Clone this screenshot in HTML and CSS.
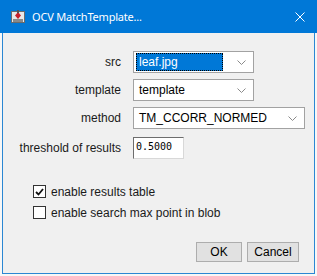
FILE: index.html
```html
<!DOCTYPE html>
<html lang="en">
<head>
    <meta charset="UTF-8">
    <title>OCV MatchTemplate...</title>
    <link rel="stylesheet" href="styles.css">
</head>
<body>
    <div class="titlebar">
        <svg class="app-icon" width="14" height="14" viewBox="0 0 14 14">
            <rect x="0.5" y="1.5" width="13" height="11" fill="#e8e8e8" stroke="#6b6b6b"/>
            <rect x="2" y="9" width="10" height="3" fill="#8a8a8a"/>
            <path d="M7 2 L10 5.5 L7 9 L4 5.5 Z" fill="#c8202a"/>
            <rect x="6" y="0" width="2" height="3" fill="#555"/>
        </svg>
        <span class="title">OCV MatchTemplate...</span>
        <svg class="close" width="10" height="10" viewBox="0 0 10 10">
            <path d="M0.5 0.5 L9.5 9.5 M9.5 0.5 L0.5 9.5" stroke="#fff" stroke-width="1"/>
        </svg>
    </div>

    <div class="dialog">
        <div class="form">
            <span class="label">src</span>
            <div class="combo combo-short">
                <span class="combo-value selected">leaf.jpg</span>
                <svg class="chevron" width="9" height="5" viewBox="0 0 9 5"><polyline points="0.5,0.5 4.5,4.5 8.5,0.5" fill="none" stroke="#8a8a8a"/></svg>
            </div>

            <span class="label">template</span>
            <div class="combo combo-short">
                <span class="combo-value">template</span>
                <svg class="chevron" width="9" height="5" viewBox="0 0 9 5"><polyline points="0.5,0.5 4.5,4.5 8.5,0.5" fill="none" stroke="#8a8a8a"/></svg>
            </div>

            <span class="label">method</span>
            <div class="combo combo-long">
                <span class="combo-value">TM_CCORR_NORMED</span>
                <svg class="chevron" width="9" height="5" viewBox="0 0 9 5"><polyline points="0.5,0.5 4.5,4.5 8.5,0.5" fill="none" stroke="#8a8a8a"/></svg>
            </div>

            <span class="label label-last">threshold of results</span>
            <div class="textfield">0.5000</div>
        </div>

        <div class="checks">
            <div class="check-row">
                <span class="checkbox">
                    <svg width="9" height="8" viewBox="0 0 9 8"><polyline points="1,4 3.5,6.5 8,1" fill="none" stroke="#111" stroke-width="1.8"/></svg>
                </span>
                <span>enable results table</span>
            </div>
            <div class="check-row">
                <span class="checkbox"></span>
                <span>enable search max point in blob</span>
            </div>
        </div>

        <div class="buttons">
            <button class="btn btn-ok">OK</button>
            <button class="btn btn-cancel">Cancel</button>
        </div>
    </div>
</body>
</html>
```

FILE: styles.css
```css
/* Page */
body {
    margin: 0;
    width: 317px;
    height: 276px;
    background: #f7f7f7;
    font-family: "Liberation Sans", Arial, sans-serif;
    font-size: 12px;
    color: #000;
    overflow: hidden;
}

/* Title bar */
.titlebar {
    height: 33px;
    background: #0078d7;
    display: flex;
    align-items: center;
    padding: 0 12px 0 11px;
    box-sizing: border-box;
    color: #fff;
}

.app-icon {
    margin-right: 7px;
    margin-top: 1px;
}

.title {
    font-family: "Noto Sans", "Open Sans", sans-serif;
    font-size: 11px;
    letter-spacing: -0.2px;
    flex: 1;
}

/* Dialog body */
.dialog {
    margin-left: 2px;
    width: 313px;
    height: 241px;
    box-sizing: border-box;
    background: #f0f0f0;
    border: 1px solid #2b87d3;
    border-top: none;
    display: flex;
    flex-direction: column;
}

.form {
    display: grid;
    grid-template-columns: 106px auto;
    column-gap: 12px;
    row-gap: 6px;
    padding: 18px 0 0 12px;
    justify-items: start;
    align-items: center;
}

.label {
    justify-self: end;
    color: #1a1a1a;
}

.label-last,
.textfield {
    margin-top: 2px;
}

/* Combo boxes */
.combo {
    height: 22px;
    box-sizing: border-box;
    background: #fff;
    border: 1px solid #a2a2a2;
    display: flex;
    align-items: center;
    padding: 0 4px 0 2px;
}

.combo-short {
    width: 121px;
}

.combo-long {
    width: 172px;
}

.combo-value {
    flex: 1;
    padding: 1px 2px;
    line-height: 14px;
    border: 1px solid transparent;
}

.combo-value.selected {
    background: #0078d7;
    color: #fff;
    border: 1px dotted #000;
    margin-right: 8px;
}

.chevron {
    margin-left: 6px;
    margin-right: 3px;
}

/* Text field */
.textfield {
    width: 51px;
    height: 22px;
    box-sizing: border-box;
    background: #fff;
    border-top: 1px solid #6d6d6d;
    border-left: 1px solid #6d6d6d;
    border-right: 1px solid #d8d8d8;
    border-bottom: 1px solid #d8d8d8;
    font-family: "DejaVu Sans Mono", "Liberation Mono", monospace;
    font-size: 10px;
    padding: 3px 0 0 2px;
}

/* Checkboxes */
.checks {
    margin-top: 22px;
    padding-left: 30px;
}

.check-row {
    height: 21px;
    display: flex;
    align-items: center;
    gap: 5px;
    color: #1a1a1a;
}

.checkbox {
    width: 13px;
    height: 13px;
    box-sizing: border-box;
    border: 1px solid #333;
    background: #fff;
    display: flex;
    align-items: center;
    justify-content: center;
}

/* Buttons */
.buttons {
    margin-top: 19px;
    display: flex;
    justify-content: flex-end;
    gap: 5px;
    padding-right: 15px;
}

.btn {
    height: 20px;
    box-sizing: border-box;
    background: #e1e1e1;
    border: 1px solid #adadad;
    font-family: "Liberation Sans", Arial, sans-serif;
    font-size: 12px;
    color: #000;
    padding: 0;
}

.btn-ok {
    width: 46px;
}

.btn-cancel {
    width: 52px;
}
```
